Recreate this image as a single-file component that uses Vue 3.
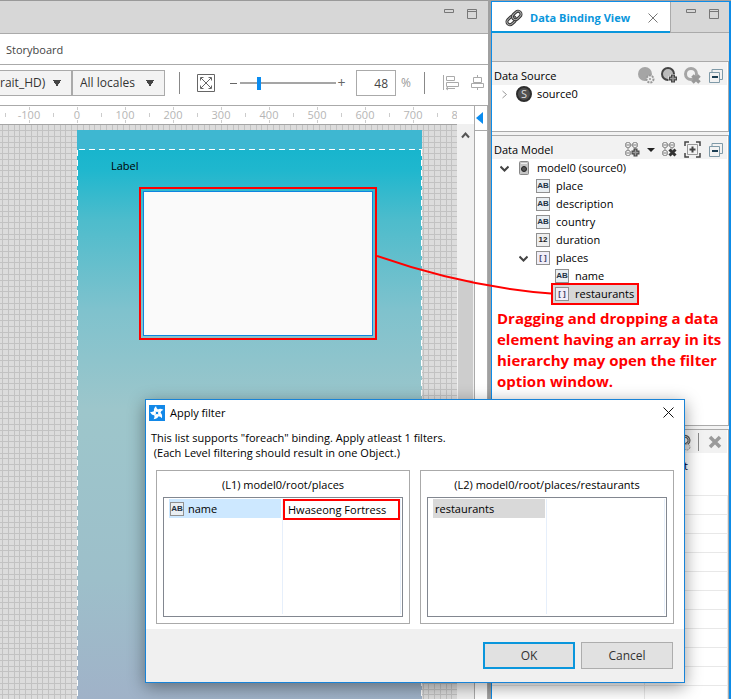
<script setup>
import { ref } from 'vue'

const zoom = ref(48)
const slider = ref(18)
const filterValue = ref('Hwaseong Fortress')

const UNIT = 48
const ORIGIN = 77
const majors = Array.from({ length: 10 }, (_, i) => ({ x: ORIGIN + (i - 1) * UNIT, label: (i - 1) * 100 }))
const minors = Array.from({ length: 10 }, (_, i) => ORIGIN - 72 + i * UNIT)

const STEP = 5.76
let gridPath = ''
for (let i = -14; i < 70; i++) gridPath += `M${Math.round(ORIGIN + i * STEP)} 0V900`
for (let i = 0; i < 150; i++) gridPath += `M0 ${Math.round(5 + i * STEP)}H460`

const modelRows = [
  { label: 'model0 (source0)', level: 0, icon: 'model', open: true },
  { label: 'place', level: 1, icon: 'AB' },
  { label: 'description', level: 1, icon: 'AB' },
  { label: 'country', level: 1, icon: 'AB' },
  { label: 'duration', level: 1, icon: '12' },
  { label: 'places', level: 1, icon: '[ ]', open: true },
  { label: 'name', level: 2, icon: 'AB' },
  { label: 'restaurants', level: 2, icon: '[ ]', marked: true },
]
</script>

<template>
  <div class="app">
    <main class="editor">
      <div class="tabbar">
        <button class="winbtn" aria-label="Minimize"><svg width="10" height="14"><path d="M.5 2.500h9v3h-9z" /></svg></button>
        <button class="winbtn" aria-label="Maximize"><svg width="10" height="14"><path d="M.5 2.500h9v9h-9zM.5 4.500h9" /></svg></button>
      </div>
      <nav class="modes"><a href="#storyboard">Storyboard</a></nav>
      <div class="toolbar">
        <select class="device" aria-label="Device"><option>rait_HD)</option></select>
        <select class="locale" aria-label="Locale"><option>All locales</option></select>
        <span class="sep"></span>
        <button class="fit" aria-label="Fit to window">
          <svg width="18" height="18"><path d="M.5.5h17v17H.5zM4 4l10 10M14 4L4 14M3.500 6.500v-3h3M11.500 3.500h3v3M14.500 11.500v3h-3M6.500 14.500h-3v-3" /></svg>
        </button>
        <div class="zoomer">
          <span class="minus"></span>
          <input v-model="slider" type="range" aria-label="Zoom level" />
          <span class="plus">+</span>
        </div>
        <label class="percent"><input v-model="zoom" type="text" aria-label="Zoom percent" /><span>%</span></label>
        <span class="sep"></span>
        <div class="aligns">
          <button aria-label="Align left"><svg width="17" height="16"><path d="M.5 0v15M3.500 1.500h8v4h-8zM3.500 7.500h12v4h-12zM3 13.500h9M5 12l-2 1.500 2 1.500" /></svg></button>
          <button aria-label="Align center"><svg width="14" height="16"><path d="M6.500 0v3M6.500 7v2M6.500 13v2M2.500 2.500h8v5h-8zM.5 8.500h12v4H.5z" /></svg></button>
        </div>
      </div>
      <div class="stage">
        <div class="view">
          <svg class="ruler" width="457" height="18" aria-label="Ruler">
            <g v-for="m in majors" :key="m.label">
              <path :d="`M${m.x + 0.5} 1v3M${m.x + 0.5} 14v3`" />
              <text :x="m.x" y="13">{{ m.label }}</text>
            </g>
            <path v-for="x in minors" :key="x" :d="`M${x + 0.5} 7v4`" />
          </svg>
          <div class="canvas">
            <svg class="grid" width="457" height="900"><path :d="gridPath" /></svg>
            <section class="screen">
              <div class="status"></div>
              <div class="content">
                <p>Label</p>
                <div class="marked"><div class="listbox"></div></div>
              </div>
            </section>
          </div>
        </div>
        <div class="vscroll">
          <button aria-label="Scroll up"><svg width="10" height="8"><path d="M1 6.500l3.500-4 3.500 4" /></svg></button>
          <div class="thumb"></div>
        </div>
        <div class="palette">
          <button aria-label="Show palette"><svg width="7" height="12"><path d="M7 0v12L0 6z" /></svg></button>
        </div>
      </div>
    </main>

    <aside class="side">
      <div class="sidetabs">
        <div class="tab">
          <svg class="chain" width="18" height="18" viewBox="0 0 18 18">
            <g transform="rotate(-43 9 9)" fill="none"><rect x="0.500" y="6" width="9.500" height="6" rx="3" stroke="#333" stroke-width="3" /><rect x="0.500" y="6" width="9.500" height="6" rx="3" stroke="#aaa" /><rect x="8" y="6" width="9.500" height="6" rx="3" stroke="#333" stroke-width="3" /><rect x="8" y="6" width="9.500" height="6" rx="3" stroke="#aaa" /></g>
          </svg>
          <span>Data Binding View</span>
          <button aria-label="Close view"><svg width="10" height="10"><path d="M.5.5l9 9M9.500.5l-9 9" /></svg></button>
        </div>
        <div class="sidewin">
          <button class="winbtn" aria-label="Minimize view"><svg width="10" height="14"><path d="M.5 2.500h9v3h-9z" /></svg></button>
          <button class="winbtn" aria-label="Maximize view"><svg width="10" height="14"><path d="M.5 2.500h9v9h-9zM.5 4.500h9" /></svg></button>
        </div>
      </div>
      <div class="strip"></div>

      <section class="box source">
        <header>
          <h2>Data Source</h2>
          <div class="tools">
            <button aria-label="Configure source"><svg width="17" height="17"><circle cx="7" cy="7" r="7" fill="#a5a5a5" /><circle cx="12" cy="12" r="3.500" fill="#eee" stroke="#999" stroke-width="2" stroke-dasharray="2 1" /><circle cx="12" cy="12" r="1" fill="#999" /></svg></button>
            <button aria-label="Add source"><svg width="17" height="17"><circle cx="7" cy="7" r="6" fill="#bbb" stroke="#444" stroke-width="2" /><path d="M12 7v9M7.500 11.500h9" stroke="#f2f2f2" stroke-width="5" /><path d="M12 7.500v8M8 11.500h8" stroke="#444" stroke-width="4" /><path d="M12 8.500v6M9 11.500h6" stroke="#999" stroke-width="1.500" /></svg></button>
            <button aria-label="Remove source"><svg width="17" height="17"><circle cx="7" cy="7" r="5.500" fill="#f2f2f2" stroke="#a5a5a5" stroke-width="3" /><path d="M8.500 8.500l7 7M15.500 8.500l-7 7" stroke="#999" stroke-width="3.500" /></svg></button>
            <button class="collapse" aria-label="Collapse sources"><svg width="14" height="14"><path d="M3 3V.5h10.500v10H11M.5 3.500h10v10H.5z" fill="none" stroke="#7f9aa8" /><path d="M3 8h6" stroke="#1d3f54" stroke-width="2" /></svg></button>
          </div>
        </header>
        <div class="row">
          <svg class="arrow closed" width="9" height="9"><path d="M2.500 1l4 3.500-4 3.500" /></svg>
          <svg class="srcicon" width="16" height="16"><circle cx="8" cy="8" r="7" fill="#505050" stroke="#2d2d2d" stroke-width="2" /><text x="8" y="12" text-anchor="middle">S</text></svg>
          <span>source0</span>
        </div>
      </section>

      <section class="box model">
        <header>
          <h2>Data Model</h2>
          <div class="tools">
            <button aria-label="Add model"><svg width="17" height="17"><g fill="#f0f0f0" stroke="#808080"><rect x="1.500" y="1.500" width="5" height="5" rx="2" /><rect x="8.500" y="1.500" width="5" height="5" rx="2" /><rect x="1.500" y="9.500" width="5" height="5" rx="2" /><path d="M6.500 4h2M4 6.500v3M11 6.500v2M2 4h4M9 4h4M2 12h4" /></g><path d="M11.500 7.500v8M7.500 11.500h8" stroke="#444" stroke-width="4" /><path d="M11.500 8.500v6M8.500 11.500h6" stroke="#999" stroke-width="1.500" /></svg></button>
            <button class="drop" aria-label="Model menu"><svg width="8" height="4"><path d="M0 0h8L4 4z" fill="#222" /></svg></button>
            <button aria-label="Remove model"><svg width="17" height="17"><g fill="#f0f0f0" stroke="#808080"><rect x="1.500" y="1.500" width="5" height="5" rx="2" /><rect x="8.500" y="1.500" width="5" height="5" rx="2" /><rect x="1.500" y="9.500" width="5" height="5" rx="2" /><path d="M6.500 4h2M4 6.500v3M11 6.500v2M2 4h4M9 4h4M2 12h4" /></g><path d="M8.500 8.500l6 6M14.500 8.500l-6 6" stroke="#333" stroke-width="3" /></svg></button>
            <button aria-label="Expand"><svg width="17" height="17"><g fill="none" stroke="#444"><path d="M1 5V1h4M12 1h4v4M16 12v4h-4M5 16H1v-4" stroke-width="1.500" /><path d="M3.500 3.500h10v10h-10z" stroke="#999" /><path d="M8.500 5.500v6M5.500 8.500h6" stroke-width="2" /></g></svg></button>
            <button class="collapse" aria-label="Collapse models"><svg width="14" height="14"><path d="M3 3V.5h10.500v10H11M.5 3.500h10v10H.5z" fill="none" stroke="#7f9aa8" /><path d="M3 8h6" stroke="#1d3f54" stroke-width="2" /></svg></button>
          </div>
        </header>
        <ul class="tree">
          <li v-for="r in modelRows" :key="r.label" class="row" :class="'l' + r.level">
            <svg v-if="r.open" class="arrow" width="9" height="9"><path d="M.5 2.500l4 4 4-4" /></svg>
            <span v-else class="arrow"></span>
            <span class="item" :class="{ hit: r.marked }">
              <svg v-if="r.icon === 'model'" class="modelicon" width="16" height="14"><rect x="3.500" y=".5" width="9" height="13" rx="1" fill="#c4c4c4" stroke="#888" /><path d="M5 2.500h6" stroke="#eee" /><circle cx="8" cy="8" r="2.500" fill="#555" stroke="#222" /></svg>
              <i v-else class="type" :class="{ arr: r.icon === '[ ]', num: r.icon === '12' }">{{ r.icon }}</i>
              <span>{{ r.label }}</span>
            </span>
          </li>
        </ul>
        <p class="note">Dragging and dropping a data<br />element having an array in its<br />hierarchy may open the filter<br />option window.</p>
      </section>

      <section class="box mapping">
        <header>
          <div class="tools">
            <button aria-label="Unlink"><svg width="12" height="17"><path d="M1 6a4 4 0 1 1 7 3l-3 2" fill="none" stroke="#555" stroke-width="3" /><path d="M1 6a4 4 0 1 1 7 3l-3 2" fill="none" stroke="#bbb" /><circle cx="7" cy="13" r="3" fill="#ddd" stroke="#999" stroke-dasharray="2 1" /></svg></button>
            <span class="sep"></span>
            <button aria-label="Delete mapping"><svg width="14" height="14"><path d="M2 2l10 10M12 2L2 12" stroke="#9a9a9a" stroke-width="3.500" /></svg></button>
          </div>
        </header>
        <table>
          <thead><tr><th></th><th>t</th></tr></thead>
          <tbody><tr v-for="n in 11" :key="n"><td></td><td></td></tr></tbody>
        </table>
      </section>
    </aside>

    <svg class="link" width="176" height="42"><path d="M0 1C60 22 115 34 174 38.500" /></svg>

    <form class="dialog" role="dialog" aria-label="Apply filter" @submit.prevent>
      <div class="title">
        <svg width="16" height="16" viewBox="0 0 16 16"><rect width="16" height="16" fill="#1288e8" /><path v-for="a in 5" :key="a" :transform="`rotate(${a * 72 - 20} 8 8)`" d="M6 6.500Q5 3 9.500 1Q8.500 3.500 10.500 6Z" fill="#fff" /><circle cx="8" cy="8" r="1.800" fill="#1288e8" stroke="#fff" /></svg>
        <span>Apply filter</span>
        <button type="button" aria-label="Close"><svg width="11" height="11"><path d="M.5.5l10 10M10.500.5l-10 10" /></svg></button>
      </div>
      <p class="intro">This list supports "foreach" binding. Apply atleast 1 filters.<br />&nbsp;(Each Level filtering should result in one Object.)</p>
      <div class="groups">
        <section class="group">
          <h3>(L1) model0/root/places</h3>
          <div class="list">
            <label class="key sel" for="name-filter"><i class="type">AB</i>name</label>
            <div class="val"><input id="name-filter" v-model="filterValue" type="text" /></div>
          </div>
        </section>
        <section class="group">
          <h3>(L2) model0/root/places/restaurants</h3>
          <div class="list">
            <div class="key idle">restaurants</div>
            <div class="val"></div>
          </div>
        </section>
      </div>
      <footer>
        <button class="primary">OK</button>
        <button type="button">Cancel</button>
      </footer>
    </form>
  </div>
</template>

<style>
body { margin: 0; }
</style>

<style scoped>
* { box-sizing: border-box; }
.app {
  position: relative;
  display: grid;
  grid-template-columns: minmax(0, 1fr) 240px;
  height: 100vh;
  min-height: 600px;
  overflow: hidden;
  font: 11px/16px "Open Sans", "Noto Sans", sans-serif;
  color: #000;
  background: #a0a0a0;
}
button { padding: 0; border: 0; background: none; font: inherit; color: inherit; display: flex; align-items: center; justify-content: center; }
input, select { font: inherit; color: inherit; margin: 0; border-radius: 0; }
p, h2, h3, ul { margin: 0; padding: 0; font-size: inherit; font-weight: normal; }
svg { display: block; flex: none; }

.editor { display: flex; flex-direction: column; min-width: 0; margin-right: 3px; border-top: 1px solid #999; background: #fff; }
.tabbar { display: flex; flex: none; justify-content: flex-end; gap: 13px; height: 33px; padding: 6px 11px 0 0; background: #d7d7d7; border-bottom: 1px solid #aaa; }
.winbtn { height: 14px; }
.winbtn path { fill: none; stroke: #777; }
.modes { flex: none; height: 31px; padding: 8px 6px; border-bottom: 1px solid #aaa; }
.modes a { color: #444; text-decoration: none; }
.toolbar { display: flex; flex: none; align-items: center; height: 41px; padding-bottom: 4px; border-bottom: 1px solid #aaa; color: #333; font-size: 12px; }
.toolbar select {
  height: 26px;
  padding: 0 0 0 7px;
  border: 1px solid #aaa;
  appearance: none;
  background-color: #f3f3f3;
  background-image: linear-gradient(to bottom left, #444 50%, transparent 51%), linear-gradient(to bottom right, #444 50%, transparent 51%);
  background-repeat: no-repeat;
  background-size: 4px 7px;
  background-position: right 14px center, right 10px center;
}
.toolbar .device { width: 72px; padding-left: 0; border-left: 0; }
.toolbar .locale { width: 93px; }
.sep { width: 1px; height: 22px; background: #888; }
.toolbar .fit { margin: 0 0 0 17px; }
.fit path { fill: none; stroke: #666; }
.zoomer { display: flex; align-items: center; margin-left: 15px; }
.minus { width: 7px; height: 1px; background: #666; margin-right: 3px; }
.zoomer input { appearance: none; width: 96px; height: 14px; background: linear-gradient(#a5a5a5, #a5a5a5) center / 100% 2px no-repeat; }
.zoomer input::-webkit-slider-thumb { appearance: none; width: 4px; height: 13px; background: #0a8cf0; }
.plus { width: 11px; text-align: center; font-size: 14px; color: #666; }
.percent { display: flex; align-items: center; gap: 5px; margin: 0 13px 0 9px; color: #999; }
.percent input { width: 40px; height: 26px; padding: 0 7px; border: 1px solid #aaa; text-align: right; color: #444; }
.toolbar > .locale + .sep { margin-left: 14px; }
.aligns { display: flex; gap: 11px; margin-left: 18px; }
.aligns path { fill: none; stroke: #aaa; }

.stage { display: flex; flex: 1; min-height: 0; }
.view { display: flex; flex-direction: column; flex: 1; min-width: 0; overflow: hidden; }
.ruler path { stroke: #ccc; }
.ruler text { fill: #b5b5b5; font-size: 11px; text-anchor: middle; }
.canvas { position: relative; flex: 1; padding: 5px 0 0 77px; border-top: 1px solid #a5a5a5; background: #dcdcdc; overflow: hidden; }
.grid { position: absolute; top: 0; left: 0; }
.grid path { stroke: #c2c2c2; fill: none; shape-rendering: crispEdges; }
.screen {
  position: relative;
  display: flex;
  flex-direction: column;
  width: 345px;
  height: 100%;
  background:
    repeating-linear-gradient(#fff 0 6px, transparent 6px 10px) left top / 1px 100% no-repeat,
    repeating-linear-gradient(#fff 0 6px, transparent 6px 10px) right top / 1px 100% no-repeat,
    linear-gradient(#18b5cd 20px, #1fb7ce 40px, #4dbccc 90px, #7fc2cd 180px, #9dc6cb 280px, #9dbfca 450px, #a0b2c8 570px);
}
.status { flex: none; height: 20px; background: repeating-linear-gradient(90deg, transparent 0 2px, #fff 2px 8px, transparent 8px 10px) bottom / 100% 1px no-repeat, #3eb7d1; }
.content p { padding: 8px 34px 13px; color: #000; }
.marked { width: 238px; height: 153px; margin-left: 62px; padding: 2px; border: 2px solid #f00; }
.listbox { height: 100%; border: 1px solid #0d84e0; background: #fafafa; }
.vscroll { width: 17px; margin-top: 18px; padding: 7px 1px 0; background: #f0f0f0; }
.vscroll path { fill: none; stroke: #555; stroke-width: 2; }
.vscroll button { width: 15px; height: 8px; }
.thumb { width: 15px; height: 320px; margin-top: 141px; background: #cdcdcd; }
.palette { width: 14px; border: 1px solid #aaa; border-top: 0; }
.palette button { width: 100%; height: 25px; border-bottom: 1px solid #aaa; padding-right: 3px; }
.palette path { fill: #0a8cf0; }

.side { display: flex; flex-direction: column; min-width: 0; margin-top: 1px; border: 0 solid #0d8ce8; border-width: 1px 2px 0 1px; background: #f3f3f3; }
.sidetabs { display: flex; flex: none; height: 31px; }
.tab { display: flex; align-items: center; width: 178px; padding: 2px 0 0 13px; border-bottom: 2px solid #0a96dc; background: #fff; font-weight: bold; color: #0a96dc; }
.tab > span { flex: 1; margin-left: 7px; white-space: nowrap; }
.tab button { margin-right: 12px; }
.tab button path { stroke: #777; fill: none; }
.sidewin { display: flex; flex: 1; justify-content: flex-end; gap: 13px; padding: 5px 10px 0 0; border: 0 solid #aaa; border-width: 0 0 1px 1px; background: #d7d7d7; }
.strip { flex: none; height: 28px; background: #e0e0e0; }
.box { flex: none; border: 1px solid #aaa; border-left: 0; background: #fff; margin-bottom: 3px; }
.box header { display: flex; align-items: center; height: 23px; margin-right: 1px; padding: 4px 4px 0 2px; background: #f2f2f2; }
.tools { display: flex; align-items: center; gap: 6px; margin-left: auto; }
.tools .collapse { margin-left: 2px; }
.source { height: 71px; }
.model { height: 291px; }
.row { display: flex; align-items: center; height: 18px; list-style: none; }
.source .row { padding-left: 7px; }
.arrow { width: 9px; margin: 0 6px 0 1px; flex: none; }
.arrow path { fill: none; stroke: #444; stroke-width: 2; }
.arrow.closed path { stroke: #999; stroke-width: 1; }
.source .row > span { margin-left: 5px; }
.srcicon { margin-left: 1px; }
.srcicon text { fill: #ddd; font-size: 11px; }
.l0 { padding-left: 7px; }
.l1 { padding-left: 26px; }
.l2 { padding-left: 45px; }
.item { display: flex; align-items: center; gap: 6px; white-space: nowrap; padding: 0 3px 0 2px; }
.l0 .item { gap: 5px; padding-left: 1px; }
.item.hit { height: 22px; margin-left: -2px; border: 2px solid #f00; background: #d7d7d7; }
.type { display: flex; align-items: center; justify-content: center; flex: none; width: 14px; height: 14px; border: 1px solid #909090; background: #e9eef2; color: #234; font: bold 8px/12px "Liberation Sans", sans-serif; }
.type.num { color: #222; background: #eee; }
.type.arr { background: #f0eef8; color: #446; }
.note { padding: 5px 0 0 5px; font-weight: bold; font-size: 15px; line-height: 21px; color: #f00; white-space: nowrap; }
.mapping { flex: 1; overflow: hidden; }
.box.mapping header { padding: 1px 5px 0 0; }
.mapping .sep { height: 18px; margin: 0 3px 0 0; }
table { width: 100%; table-layout: fixed; border-collapse: collapse; }
th { height: 42px; padding: 5px 0 0 40px; text-align: left; vertical-align: top; font-weight: normal; color: #003; }
th:first-child, td:first-child { width: 152px; }
tbody tr { height: 19px; }
td { border: 1px solid #e8e8e8; border-left: 0; padding: 0; }

.link { position: absolute; left: 377px; top: 255px; }
.link path { fill: none; stroke: #f00; stroke-width: 2; }

.dialog { position: absolute; left: 145px; top: 399px; width: 540px; display: flex; flex-direction: column; border: 1px solid #1883d7; background: #fff; box-shadow: 0 4px 16px rgba(0, 0, 0, 0.4); color: #000; }
.title { display: flex; align-items: center; gap: 5px; height: 25px; padding: 0 10px 0 3px; }
.title button { margin-left: auto; }
.title button path { stroke: #111; fill: none; }
.intro { padding: 5px 5px 0; line-height: 15px; }
.groups { display: grid; grid-template-columns: 1fr 1fr; gap: 10px; padding: 10px; padding-bottom: 5px; }
.group { border: 1px solid #aaa; padding: 6px; height: 154px; }
.group h3 { text-align: center; height: 20px; line-height: 16px; }
.list { display: grid; grid-template-columns: 117px 1fr; height: 120px; padding: 1px 1px 2px; border: 1px solid #828790; }
.key { display: flex; align-items: center; gap: 4px; height: 19px; margin-left: 4px; padding-left: 1px; margin-right: 1px; }
.key.idle { padding-left: 2px; }
.sel { background: #cde8ff; }
.idle { background: #d9d9d9; }
.val { border: 1px solid #e6effb; border-width: 0 1px; }
.val input { width: 100%; height: 21px; border: 2px solid #f00; padding: 0 3px; background: #fff; }
footer { display: flex; justify-content: flex-end; gap: 6px; height: 53px; padding: 13px 11px; background: #f0f0f0; }
footer button { width: 92px; height: 27px; border: 1px solid #adadad; background: #e1e1e1; color: #333; font-size: 12px; }
footer .primary { border: 2px solid #0a96dc; }
</style>
